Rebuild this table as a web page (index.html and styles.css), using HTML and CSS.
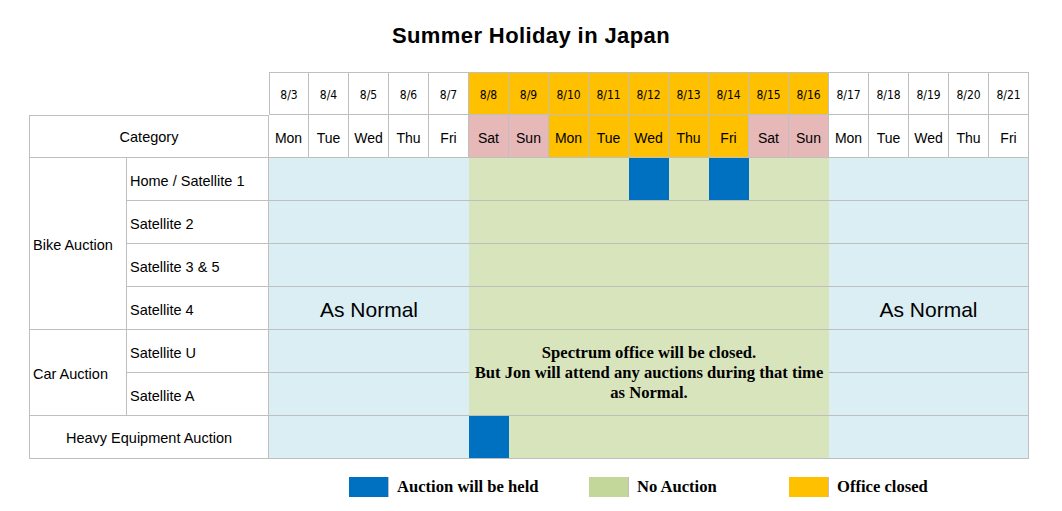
FILE: index.html
```html
<!DOCTYPE html>
<html lang="en">
<head>
<meta charset="utf-8">
<title>Summer Holiday in Japan</title>
<link rel="stylesheet" href="styles.css">
</head>
<body>
<h1 class="title">Summer Holiday in Japan</h1>
<div class="sheet">
  <div class="blank s2"></div>
  <div class="date first">8/3</div>
  <div class="date">8/4</div>
  <div class="date">8/5</div>
  <div class="date">8/6</div>
  <div class="date">8/7</div>
  <div class="date closed">8/8</div>
  <div class="date closed">8/9</div>
  <div class="date closed">8/10</div>
  <div class="date closed">8/11</div>
  <div class="date closed">8/12</div>
  <div class="date closed">8/13</div>
  <div class="date closed">8/14</div>
  <div class="date closed">8/15</div>
  <div class="date closed">8/16</div>
  <div class="date">8/17</div>
  <div class="date">8/18</div>
  <div class="date">8/19</div>
  <div class="date">8/20</div>
  <div class="date">8/21</div>

  <div class="cat s2">Category</div>
  <div class="day">Mon</div>
  <div class="day">Tue</div>
  <div class="day">Wed</div>
  <div class="day">Thu</div>
  <div class="day">Fri</div>
  <div class="day weekend">Sat</div>
  <div class="day weekend">Sun</div>
  <div class="day closed">Mon</div>
  <div class="day closed">Tue</div>
  <div class="day closed">Wed</div>
  <div class="day closed">Thu</div>
  <div class="day closed">Fri</div>
  <div class="day weekend">Sat</div>
  <div class="day weekend">Sun</div>
  <div class="day">Mon</div>
  <div class="day">Tue</div>
  <div class="day">Wed</div>
  <div class="day">Thu</div>
  <div class="day">Fri</div>

  <div class="group r4">Bike Auction</div>
  <div class="sub">Home / Satellite 1</div>
  <div class="normal s5"></div>
  <div class="none s4"></div>
  <div class="held"></div>
  <div class="none"></div>
  <div class="held"></div>
  <div class="none s2"></div>
  <div class="normal right s5"></div>

  <div class="sub">Satellite 2</div>
  <div class="normal s5"></div>
  <div class="none s9"></div>
  <div class="normal right s5"></div>

  <div class="sub">Satellite 3 &amp; 5</div>
  <div class="normal s5"></div>
  <div class="none s9"></div>
  <div class="normal right s5"></div>

  <div class="sub">Satellite 4</div>
  <div class="normal s5 big">As Normal</div>
  <div class="none s9"></div>
  <div class="normal right s5 big">As Normal</div>

  <div class="group r2">Car Auction</div>
  <div class="sub">Satellite U</div>
  <div class="normal s5"></div>
  <div class="none s9 r2 note">Spectrum office will be closed.<br>But Jon will attend any auctions during that time<br>as Normal.</div>
  <div class="normal right s5"></div>

  <div class="sub">Satellite A</div>
  <div class="normal s5"></div>
  <div class="normal right s5"></div>

  <div class="heavy s2">Heavy Equipment Auction</div>
  <div class="normal s5"></div>
  <div class="held"></div>
  <div class="none s8"></div>
  <div class="normal right s5"></div>
</div>

<div class="legend">
  <div class="swatch sw-held c5"></div>
  <div class="legend-text">Auction will be held</div>
  <div class="swatch sw-none c11"></div>
  <div class="legend-text">No Auction</div>
  <div class="swatch sw-closed c16"></div>
  <div class="legend-text">Office closed</div>
</div>
</body>
</html>
```

FILE: styles.css
```css
* { box-sizing: border-box; }

body {
  margin: 0;
  width: 1062px;
  background: #ffffff;
  color: #000000;
  font-family: "Liberation Sans", Arial, sans-serif;
}

.title {
  margin: 0;
  height: 72px;
  padding-bottom: 0;
  display: flex;
  align-items: center;
  justify-content: center;
  font-size: 22px;
  font-weight: bold;
  letter-spacing: 0.4px;
}

.sheet {
  margin-left: 29px;
  display: grid;
  grid-template-columns: 98px 142px repeat(19, 40px);
  grid-template-rows: repeat(9, 43px);
}

.sheet > div {
  border-right: 1px solid #bfbfbf;
  border-bottom: 1px solid #bfbfbf;
  display: flex;
  align-items: center;
}

.s2 { grid-column: span 2; }
.s4 { grid-column: span 4; }
.s5 { grid-column: span 5; }
.s8 { grid-column: span 8; }
.s9 { grid-column: span 9; }
.r2 { grid-row: span 2; }
.r4 { grid-row: span 4; }

.sheet > .blank {
  border: none;
}

.date {
  border-top: 1px solid #bfbfbf;
  justify-content: center;
  font-family: "DejaVu Sans Condensed", "Liberation Sans Narrow", "Liberation Sans", sans-serif;
  font-stretch: condensed;
  font-size: 12px;
  padding-top: 3px;
}

.date.first { border-left: 1px solid #bfbfbf; }

.day {
  justify-content: center;
  font-size: 14px;
  padding-top: 3px;
}

.closed { background: #ffc000; }
.weekend { background: #e6b8b7; }

.cat {
  border-top: 1px solid #bfbfbf;
  border-left: 1px solid #bfbfbf;
  justify-content: center;
  font-size: 14.5px;
  padding-top: 1px;
}

.group {
  border-left: 1px solid #bfbfbf;
  font-size: 14.5px;
  padding: 3px 0 0 3px;
}

.sub {
  font-size: 14.5px;
  padding: 3px 0 0 3px;
}

.heavy {
  border-left: 1px solid #bfbfbf;
  justify-content: center;
  font-size: 14.5px;
  padding-top: 1px;
}

.sheet > .normal,
.sheet > .none,
.sheet > .held {
  border-right: none;
}

.normal { background: #daeef3; }
.sheet > .normal.right { border-right: 1px solid #bfbfbf; }
.none { background: #d8e4bc; }
.held { background: #0070c0; }

.big {
  justify-content: center;
  font-size: 21px;
  padding-top: 3px;
}

.note {
  justify-content: center;
  text-align: center;
  font-family: "Liberation Serif", "Times New Roman", serif;
  font-weight: bold;
  font-size: 16.6px;
  line-height: 20px;
  padding-top: 0;
}

.legend {
  margin: 18px 0 0 29px;
  display: grid;
  grid-template-columns: 98px 142px repeat(19, 40px);
  grid-template-rows: 20px;
  align-items: center;
}

.swatch {
  height: 20px;
  border-right: 1px solid #bfbfbf;
}

.c5 { grid-column: 5; }
.c11 { grid-column: 11; }
.c16 { grid-column: 16; }

.sw-held { background: #0070c0; }
.sw-none { background: #c4d79b; }
.sw-closed { background: #ffc000; }

.legend-text {
  grid-column: span 4;
  padding-left: 8px;
  white-space: nowrap;
  font-family: "Liberation Serif", "Times New Roman", serif;
  font-weight: bold;
  font-size: 16.6px;
}
```
